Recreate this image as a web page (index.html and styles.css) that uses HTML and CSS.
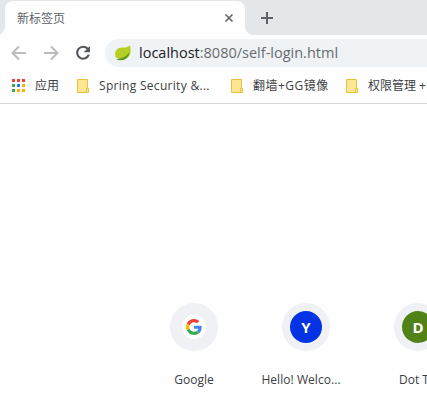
FILE: index.html
```html
<!DOCTYPE html>
<html lang="zh-CN">
<head>
<meta charset="utf-8">
<title>新标签页</title>
<link rel="stylesheet" href="styles.css">
</head>
<body>
<header class="tabstrip">
  <div class="tab">
    <span class="tab-title">新标签页</span>
    <svg class="close" width="10" height="10" viewBox="0 0 10 10"><path d="M1.5 1.5l7 7m0-7l-7 7"/></svg>
  </div>
  <svg class="plus" width="14" height="14" viewBox="0 0 14 14"><path d="M7 1v12M1 7h12"/></svg>
</header>
<nav class="toolbar">
  <svg class="arrow" width="16" height="16" viewBox="0 0 16 16"><path d="M15 8H2M8 1.5L1.5 8L8 14.5"/></svg>
  <svg class="arrow" width="16" height="16" viewBox="0 0 16 16"><path d="M1 8h13M8 1.5L14.5 8L8 14.5"/></svg>
  <svg class="reload" width="16" height="16" viewBox="0 0 16 16"><path class="ring" d="M12.7 3.8A6 6 0 1 0 13.8 9.7"/><path class="head" d="M15 1v6.3H8.7z"/></svg>
  <div class="omnibox">
    <svg width="18" height="18" viewBox="0 0 18 18"><path fill="#b5cf20" d="M1.5 13C0 6 4 3.4 9 3.6c3 .1 5-.8 7-2.1 1.2 5 .9 9.500-2.500 12.300C10 16.600 5 15.800 1.500 13z"/><path fill="#5d9a20" d="M2 15.200c6-.4 10-2.500 13.500-7-.6 4.500-4 8-8.500 8-2 0-4-.2-5-1z"/></svg>
    <span class="url"><b>localhost</b>:8080/self-login.html</span>
  </div>
</nav>
<nav class="bookmarks">
  <a class="apps"><svg width="13" height="13" viewBox="0 0 13 13"><path fill="#ea4335" d="M0 0h3v3H0zM5 0h3v3H5zM10 0h3v3h-3z"/><path fill="#34a853" d="M0 5h3v3H0zM0 10h3v3H0z"/><path fill="#1a80ee" d="M5 5h3v3H5z"/><path fill="#fbae08" d="M10 5h3v3h-3zM5 10h3v3H5zM10 10h3v3h-3z"/></svg><span>应用</span></a>
  <a class="spring"><svg class="folder" width="12" height="14" viewBox="0 0 12 14"><path d="M.5.5h10v9h1v4H.5zM9.500 13.500v-4h1"/></svg><span>Spring Security &amp;...</span></a>
  <a class="mirror"><svg class="folder" width="12" height="14" viewBox="0 0 12 14"><path d="M.5.5h10v9h1v4H.5zM9.500 13.500v-4h1"/></svg><span>翻墙+GG镜像</span></a>
  <a><svg class="folder" width="12" height="14" viewBox="0 0 12 14"><path d="M.5.5h10v9h1v4H.5zM9.500 13.500v-4h1"/></svg><span>权限管理 +</span></a>
</nav>
<main class="tiles">
  <a class="tile"><span class="circle"><span class="badge google"><svg width="16" height="16" viewBox="0 0 48 48"><path fill="#ea4335" d="M24 9.500c3.500 0 6.700 1.200 9.200 3.600l6.900-6.900C35.900 2.400 30.500 0 24 0 14.600 0 6.500 5.400 2.600 13.200l8 6.200C12.400 13.700 17.700 9.500 24 9.500z"/><path fill="#4285f4" d="M47 24.600c0-1.600-.2-3.100-.4-4.600H24v9h12.900c-.6 3-2.200 5.500-4.700 7.200l7.700 6C44.400 38 47 32 47 24.600z"/><path fill="#fbbc05" d="M10.500 28.600a14.500 14.500 0 0 1 0-9.200l-8-6.200a24 24 0 0 0 0 21.600z"/><path fill="#34a853" d="M24 48c6.500 0 11.900-2.100 15.900-5.800l-7.700-6c-2.200 1.500-4.900 2.300-8.200 2.300-6.300 0-11.600-4.200-13.500-9.900l-8 6.200C6.500 42.600 14.600 48 24 48z"/></svg></span></span><span class="label">Google</span></a>
  <a class="tile"><span class="circle"><span class="badge blue">Y</span></span><span class="label welcome">Hello! Welco...</span></a>
  <a class="tile last"><span class="circle"><span class="badge green">D</span></span><span class="label">Dot T</span></a>
</main>
</body>
</html>
```

FILE: styles.css
```css
* { box-sizing: border-box; }
body { margin: 0; height: 406px; overflow: hidden; background: #fefefe; font-family: "Open Sans", "Noto Sans CJK SC", sans-serif; color: #3c4043; }
svg { display: block; flex: none; }
.tabstrip { height: 35px; background: #e3e7ea; display: flex; padding: 1px 0 0 5px; }
.tab { position: relative; width: 240px; height: 34px; background: #fefefe; border-radius: 8px 8px 0 0; display: flex; align-items: center; justify-content: space-between; padding: 0 11px 0 12px; }
.tab::before, .tab::after { content: ""; position: absolute; bottom: 0; width: 8px; height: 8px; }
.tab::before { left: -8px; background: radial-gradient(circle at 0 0, transparent 7.5px, #fefefe 8px); }
.tab::after { right: -8px; background: radial-gradient(circle at 100% 0, transparent 7.5px, #fefefe 8px); }
.tab-title { margin-top: 2px; font-size: 12px; line-height: 18px; color: #5f6368; }
.close { fill: none; stroke: #5f6368; stroke-width: 1.6; }
.plus { margin: 10px 0 0 15px; fill: none; stroke: #5f6368; stroke-width: 2; }
.toolbar { height: 33px; display: flex; align-items: center; gap: 16px; padding: 3px 0 0 11px; }
.arrow { fill: none; stroke: #babcbe; stroke-width: 2; }
.reload .ring { fill: none; stroke: #53575b; stroke-width: 2.1; }
.reload .head { fill: #53575b; }
.omnibox { flex: 1; height: 28px; margin-left: -2px; border-radius: 14px 0 0 14px; background: #eff3f5; display: flex; align-items: center; gap: 7px; padding-left: 9px; }
.url { font-size: 14.5px; line-height: 20px; color: #686c70; white-space: nowrap; }
.url b { font-weight: 400; color: #202124; }
.bookmarks { height: 36px; border-bottom: 1px solid #d5d6db; display: flex; padding-left: 12px; font-size: 12px; line-height: 18px; white-space: nowrap; }
.bookmarks a { display: flex; align-items: center; gap: 10px; flex: none; }
.apps { width: 65px; }
.spring { width: 154px; letter-spacing: .3px; }
.mirror { width: 115px; letter-spacing: .5px; }
.folder { fill: #ffe694; stroke: #e7c23c; }
.tiles { margin: 199px 0 0 138px; display: flex; }
.tile { width: 112px; flex: none; display: flex; flex-direction: column; align-items: center; }
.last { width: 65px; padding-left: 32px; align-items: flex-start; }
.last .label { margin-left: 5px; }
.circle { flex: none; width: 48px; height: 48px; border-radius: 50%; background: #eff1f4; display: flex; align-items: center; justify-content: center; }
.badge { width: 32px; height: 32px; border-radius: 50%; display: flex; align-items: center; justify-content: center; color: #fff; font-size: 15px; font-weight: 700; }
.google { width: 24px; height: 24px; background: #fff; }
.blue { background: #0432e5; }
.green { background: #518218; }
.label { margin-top: 20px; font-size: 12px; line-height: 18px; white-space: nowrap; }
.welcome { margin-right: 10px; letter-spacing: .05px; }
```
